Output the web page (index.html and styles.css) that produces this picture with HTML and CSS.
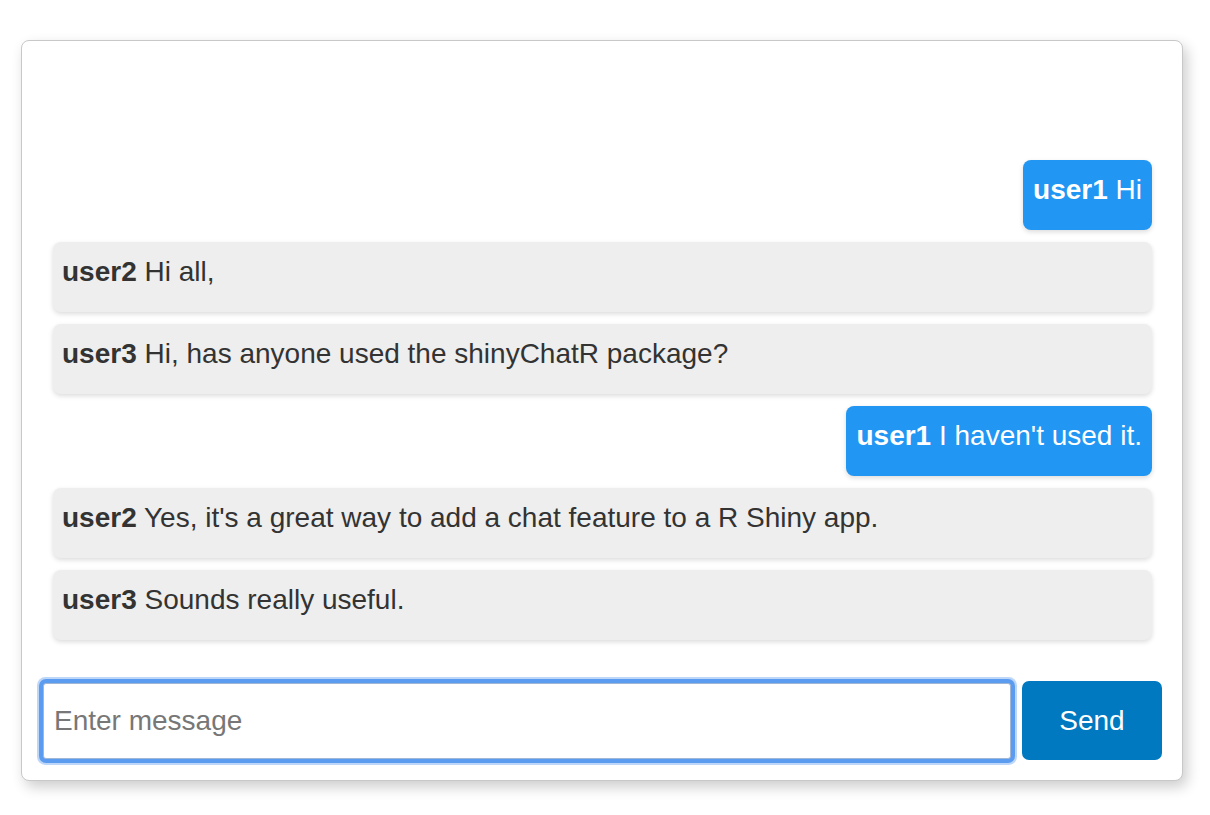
FILE: index.html
```html
<!DOCTYPE html>
<html lang="en">
<head>
<meta charset="utf-8">
<title>shinyChatR</title>
<link rel="stylesheet" href="styles.css">
</head>
<body>
<div class="chat-card">
  <div class="messages">
    <div class="bubble mine"><p><b>user1</b> Hi</p></div>
    <div class="bubble"><p><b>user2</b> Hi all,</p></div>
    <div class="bubble"><p><b>user3</b> Hi, has anyone used the shinyChatR package?</p></div>
    <div class="bubble mine"><p><b>user1</b> I haven't used it.</p></div>
    <div class="bubble"><p><b>user2</b> Yes, it's a great way to add a chat feature to a R Shiny app.</p></div>
    <div class="bubble"><p><b>user3</b> Sounds really useful.</p></div>
  </div>
  <div class="composer">
    <input class="msg-input" type="text" placeholder="Enter message">
    <button class="send-btn" type="button">Send</button>
  </div>
</div>
</body>
</html>
```

FILE: styles.css
```css
* { box-sizing: border-box; }
html, body {
  margin: 0;
  padding: 0;
  background: #ffffff;
  font-family: "Liberation Sans", Arial, Helvetica, sans-serif;
}
body {
  padding: 40px 0 0 21px;
  min-height: 815px;
}
.chat-card {
  width: 1162px;
  height: 741px;
  border: 1px solid #c8c8c8;
  border-radius: 8px;
  background: #ffffff;
  box-shadow: 4px 6px 14px rgba(0, 0, 0, 0.2);
  display: flex;
  flex-direction: column;
}
.messages {
  flex: 1;
  display: flex;
  flex-direction: column;
  justify-content: flex-end;
  gap: 12px;
  padding: 0 30px 0 31px;
}
.bubble {
  background: #eeeeee;
  color: #333333;
  border-radius: 8px;
  padding: 10px 10px 0 9px;
  box-shadow: 0 2px 5px rgba(0, 0, 0, 0.14);
  font-size: 28px;
}
.bubble p {
  margin: 0 0 20px 0;
  line-height: 40px;
}
.bubble.mine {
  align-self: flex-end;
  background: #2196f3;
  color: #ffffff;
  padding-left: 10px;
}
.composer {
  display: flex;
  align-items: center;
  gap: 11px;
  padding: 41px 20px 20px 21px;
}
.msg-input {
  flex: 1;
  height: 76px;
  border: 1px solid #9fb6d6;
  border-radius: 3px;
  padding: 0 10px;
  font-family: inherit;
  font-size: 28px;
  color: #333333;
  outline: none;
  box-shadow: 0 0 0 4px #5c9cf0, 0 0 0 6px rgba(92, 156, 240, 0.4);
  background: #ffffff;
}
.msg-input::placeholder {
  color: #777777;
}
.send-btn {
  width: 140px;
  height: 79px;
  border: none;
  border-radius: 7px;
  background: #0079c0;
  color: #ffffff;
  font-family: inherit;
  font-size: 28px;
}
```
